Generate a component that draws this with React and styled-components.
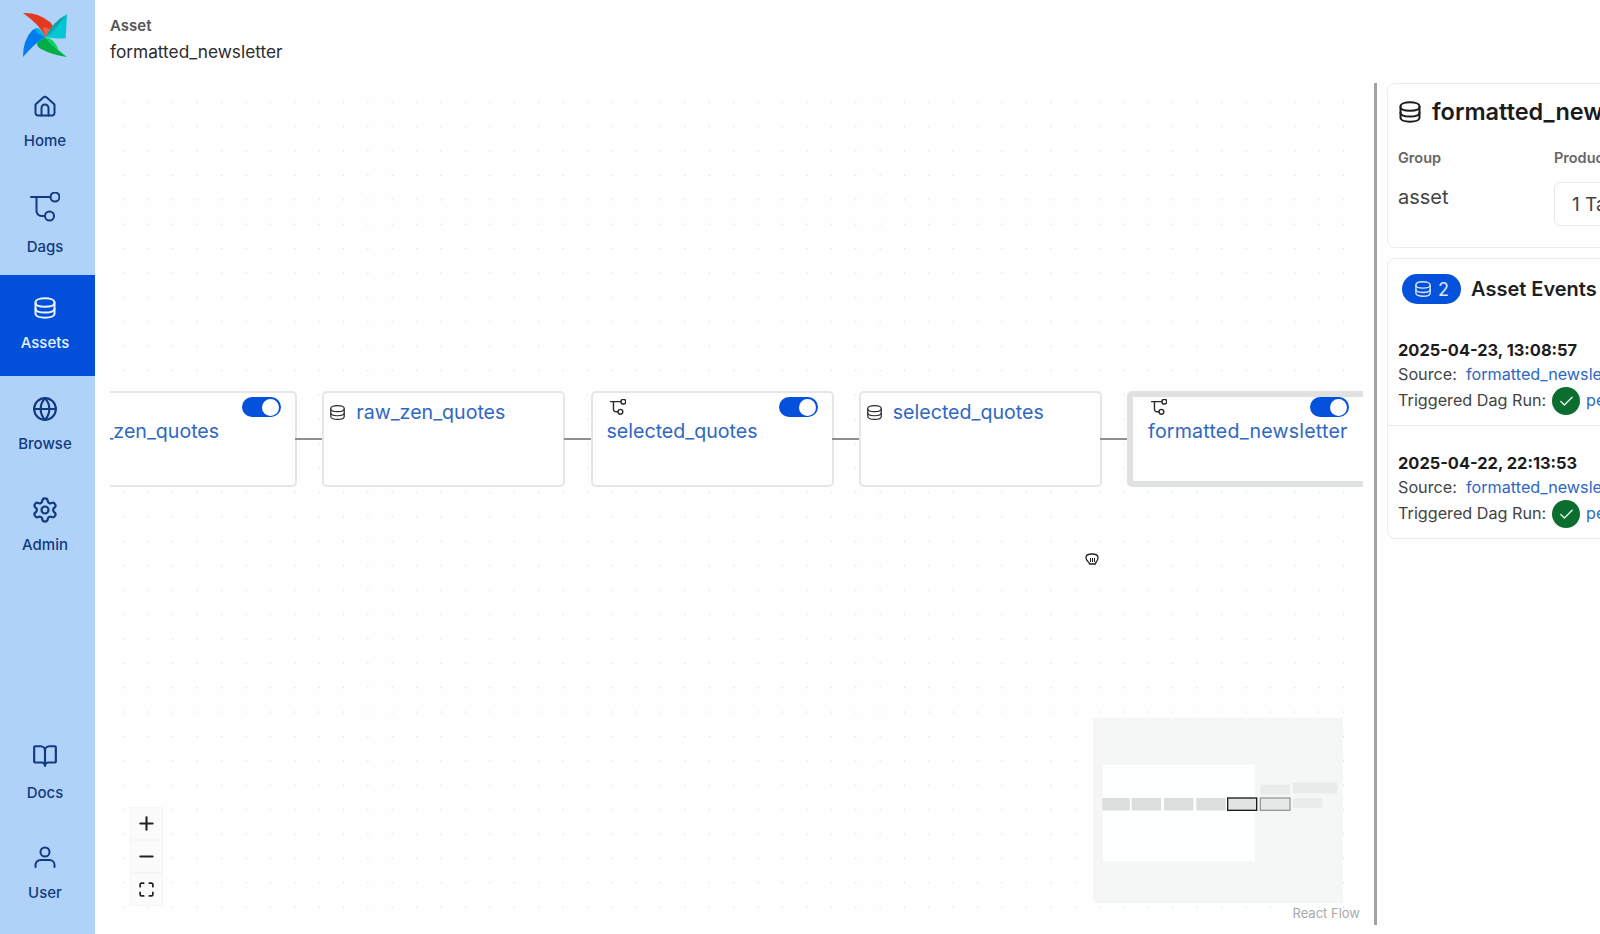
import React from 'react';
import styled, { createGlobalStyle } from 'styled-components';
import { Globe, Settings, BookOpen, Plus, Minus, Maximize, Check } from 'lucide-react';

const GlobalStyle = createGlobalStyle`
    html, body { margin: 0; padding: 0; height: 100%; background: #fefefe; }
    body { font-family: Inter, "Noto Sans", sans-serif; }
    * { box-sizing: border-box; }
`;

// icons
const DatabaseIcon = ({ size = 24, stroke = 2 }) => (
    <svg width={size} height={size} viewBox="0 0 24 24" fill="none" stroke="currentColor" strokeWidth={stroke} strokeLinecap="round" strokeLinejoin="round">
        <path d="M2.500 6.500C2.500 3.800 7 2.300 12 2.300s9.500 1.500 9.500 4.200v11c0 2.700-4.500 4.200-9.500 4.200s-9.500-1.500-9.500-4.200z" />
        <path d="M2.500 7c0 2.600 4.500 3.800 9.500 3.800s9.500-1.200 9.500-3.800" />
        <path d="M2.500 12.800c0 2.600 4.500 3.800 9.500 3.800s9.500-1.200 9.500-3.800" />
    </svg>
);

const DagIcon = ({ size = 30, stroke = 2 }) => (
    <svg width={size} height={size} viewBox="0 0 30 30" fill="none" stroke="currentColor" strokeWidth={stroke * 30 / size} strokeLinecap="round" strokeLinejoin="round">
        <path d="M1 5h19.500" />
        <circle cx="25" cy="5" r="4.500" />
        <path d="M6.500 5v14a5 5 0 0 0 5 5h3.500" />
        <circle cx="19.500" cy="24" r="4.500" />
    </svg>
);

const HomeIcon = () => (
    <svg width="24" height="24" viewBox="0 0 24 24" fill="none" stroke="currentColor" strokeWidth="2" strokeLinecap="round" strokeLinejoin="round">
        <path d="M2.500 10.500l7.800-7a2.600 2.600 0 0 1 3.400 0l7.800 7V19a2.500 2.500 0 0 1-2.500 2.500H5A2.500 2.500 0 0 1 2.500 19z" />
        <path d="M8.500 21.500V14a3.500 3.500 0 0 1 7 0v7.500" />
    </svg>
);

const UserIcon = () => (
    <svg width="24" height="24" viewBox="0 0 24 24" fill="none" stroke="currentColor" strokeWidth="2" strokeLinecap="round" strokeLinejoin="round">
        <circle cx="12" cy="7" r="4.500" />
        <path d="M2.500 22v-2a5 5 0 0 1 5-5h9a5 5 0 0 1 5 5v2" />
    </svg>
);

const Logo = () => (
    <svg width="60" height="60" viewBox="0 0 180 180">
        <path d="M24 24Q70 22 106 52Q120 68 112 82L90 96Q78 62 24 24z" fill="#e43921" />
        <path d="M84 68Q100 66 112 82L90 96z" fill="#f0604a" />
        <path d="M156 28L152 100Q124 102 92 96Q112 52 156 28z" fill="#00c7d4" />
        <path d="M156 28Q128 62 112 82L92 96Q112 52 156 28z" fill="#11a3a8" />
        <path d="M156 156Q112 150 78 132Q62 124 68 112L90 96Q120 132 156 156z" fill="#00ad46" />
        <path d="M90 96Q118 100 130 134Q146 148 156 156Q120 132 90 96z" fill="#04d659" />
        <path d="M24 156Q24 104 52 76Q68 62 90 96Q56 118 24 156z" fill="#017cee" />
        <path d="M60 70Q76 64 90 96L66 84z" fill="#00b4e6" />
    </svg>
);

const GrabCursor = () => (
    <svg width="16" height="16" viewBox="0 0 16 16" fill="#fff" stroke="#222" strokeWidth="1.300" strokeLinejoin="round">
        <path d="M2 6.500c0-2 2.500-3.500 6-3.500s6 1.500 6 3.500c0 1.500-.5 3-1.500 4-.7.8-1 1.500-1 2.500h-6c0-1-.8-1.700-1.800-2.800C2.700 9.200 2 8 2 6.500z" />
        <path d="M6.500 7v4M8.500 7v4M10.500 7v4" strokeWidth="1" />
    </svg>
);

const navTop = [
    { label: 'Home', icon: <HomeIcon /> },
    { label: 'Dags', icon: <DagIcon />, gap: 18 },
    { label: 'Assets', icon: <DatabaseIcon />, active: true },
    { label: 'Browse', icon: <Globe size={26} strokeWidth={2} /> },
    { label: 'Admin', icon: <Settings size={28} strokeWidth={1.900} /> },
];

const navBottom = [
    { label: 'Docs', icon: <BookOpen size={26} strokeWidth={2} />, gap: 15 },
    { label: 'User', icon: <UserIcon />, gap: 14 },
];

const nodes = [
    { type: 'dag', name: 'raw_zen_quotes' },
    { type: 'asset', name: 'raw_zen_quotes' },
    { type: 'dag', name: 'selected_quotes' },
    { type: 'asset', name: 'selected_quotes' },
    { type: 'dag', name: 'formatted_newsletter', selected: true },
];

const events = [
    { date: '2025-04-23, 13:08:57' },
    { date: '2025-04-22, 22:13:53' },
];

const miniNodes = [
    [68, 150], [156, 244], [253, 341], [350, 438],
];

class App extends React.Component {
    renderNavItem(item) {
        return (
            <NavItem key={item.label} $active={item.active}>
                <NavIcon>{item.icon}</NavIcon>
                <NavLabel $gap={item.gap}>{item.label}</NavLabel>
            </NavItem>
        );
    }

    renderNodes() {
        return nodes.map((node, i) => {
            const left = -56 + i * 268.25;
            return (
                <React.Fragment key={i}>
                    {i > 0 && <Edge $left={left - 27} />}
                    {node.type === 'dag' ? (
                        <Node $left={left} $selected={node.selected}>
                            <NodeTop>
                                <NodeDagIcon><DagIcon size={16} stroke={1.400} /></NodeDagIcon>
                                <Toggle><Thumb /></Toggle>
                            </NodeTop>
                            <NodeName $selected={node.selected}>{node.name}</NodeName>
                        </Node>
                    ) : (
                        <Node $left={left} $asset>
                            <AssetRow>
                                <DatabaseIcon size={17} stroke={1.700} />
                                <NodeName $inline>{node.name}</NodeName>
                            </AssetRow>
                        </Node>
                    )}
                </React.Fragment>
            );
        });
    }

    renderEvents() {
        return events.map((event) => (
            <EventRow key={event.date}>
                <EventDate>{event.date}</EventDate>
                <EventLine>
                    <EventKey>Source:</EventKey>
                    <EventLink>formatted_newsletter</EventLink>
                </EventLine>
                <EventLine>
                    <EventKey $wide>Triggered Dag Run:</EventKey>
                    <StatusDot><Check size={17} strokeWidth={2} /></StatusDot>
                    <EventLink>periodic</EventLink>
                </EventLine>
            </EventRow>
        ));
    }

    render() {
        return (
            <Page>
                <GlobalStyle />
                <Sidebar>
                    <LogoBox><Logo /></LogoBox>
                    {navTop.map((item) => this.renderNavItem(item))}
                    <NavSpacer />
                    {navBottom.map((item) => this.renderNavItem(item))}
                </Sidebar>
                <Main>
                    <Header>
                        <HeaderLabel>Asset</HeaderLabel>
                        <HeaderName>formatted_newsletter</HeaderName>
                    </Header>
                    <Body>
                        <Canvas>
                            {this.renderNodes()}
                            <CursorMark><GrabCursor /></CursorMark>
                            <Controls>
                                <ControlButton><Plus size={21} strokeWidth={2.400} /></ControlButton>
                                <ControlButton><Minus size={21} strokeWidth={2.400} /></ControlButton>
                                <ControlButton><Maximize size={17} strokeWidth={2.400} /></ControlButton>
                            </Controls>
                            <MiniMap>
                                <svg width="250" height="185" viewBox="0 0 750 555">
                                    <rect x="30" y="140" width="455" height="290" fill="#fdfefe" />
                                    {miniNodes.map(([a, b]) => (
                                        <rect key={a} x={a - 40} y="240" width={b - a} height="37" fill="#dcdddd" />
                                    ))}
                                    <rect x="404" y="240" width="87" height="37" fill="#e2e3e3" stroke="#1a1a1a" strokeWidth="4" />
                                    <rect x="502" y="240" width="89" height="37" fill="#e6e7e7" stroke="#999" strokeWidth="4" />
                                    <rect x="503" y="200" width="87" height="30" fill="#e9eaea" />
                                    <rect x="600" y="194" width="133" height="32" fill="#e9eaea" />
                                    <rect x="600" y="240" width="88" height="30" fill="#ebecec" />
                                </svg>
                            </MiniMap>
                            <Attribution>React Flow</Attribution>
                        </Canvas>
                        <Divider />
                        <Panel>
                            <InfoCard>
                                <CardTitle>
                                    <DatabaseIcon size={24} stroke={2} />
                                    <TitleText>formatted_newsletter</TitleText>
                                </CardTitle>
                                <Meta>
                                    <MetaColumn>
                                        <MetaLabel>Group</MetaLabel>
                                        <MetaValue>asset</MetaValue>
                                    </MetaColumn>
                                    <MetaColumn>
                                        <MetaLabel>Producing Tasks</MetaLabel>
                                        <TaskButton>1 Task</TaskButton>
                                    </MetaColumn>
                                </Meta>
                            </InfoCard>
                            <EventsCard>
                                <EventsHeader>
                                    <CountBadge>
                                        <DatabaseIcon size={18} stroke={1.800} />
                                        2
                                    </CountBadge>
                                    <EventsTitle>Asset Events</EventsTitle>
                                </EventsHeader>
                                {this.renderEvents()}
                            </EventsCard>
                        </Panel>
                    </Body>
                </Main>
            </Page>
        );
    }
}

export default App;

const Page = styled.div`
    display: flex;
    width: 100vw;
    height: 100vh;
    overflow: hidden;
    background: #fefefe;
`;

const Sidebar = styled.nav`
    flex: 0 0 95px;
    display: flex;
    flex-direction: column;
    padding-bottom: 9px;
    background: #b0d2f8;
`;

const LogoBox = styled.div`
    height: 73px;
    display: flex;
    justify-content: center;
    align-items: flex-start;
    padding: 5px 5px 0 0;
`;

const NavItem = styled.div`
    height: 101px;
    display: flex;
    flex-direction: column;
    align-items: center;
    padding: 21px 5px 0 0;
    color: ${props => props.$active ? '#eaf3ff' : '#123a80'};
    background: ${props => props.$active ? '#0250da' : 'transparent'};
`;

const NavIcon = styled.div`
    height: 24px;
    display: flex;
    align-items: center;
    justify-content: center;
`;

const NavLabel = styled.div`
    margin-top: ${props => props.$gap || 13}px;
    font-size: 15px;
    line-height: 20px;
    font-weight: 500;
`;

const NavSpacer = styled.div`
    flex: 1;
`;

const Main = styled.main`
    flex: 1;
    min-width: 0;
    display: flex;
    flex-direction: column;
`;

const Header = styled.header`
    flex: 0 0 83px;
    padding: 16px 15px 0;
`;

const HeaderLabel = styled.div`
    font-size: 15px;
    line-height: 20px;
    font-weight: 600;
    color: #555;
`;

const HeaderName = styled.div`
    margin-top: 4px;
    font-size: 17.300px;
    line-height: 24px;
    color: #2c2c2c;
`;

const Body = styled.div`
    flex: 1;
    min-height: 0;
    display: flex;
    padding: 0 0 9px 15px;
`;

const Canvas = styled.div`
    position: relative;
    flex: 0 0 1253px;
    overflow: hidden;
    background-color: #fefefe;
    background-image: radial-gradient(circle, #dadada 0.8px, transparent 1px);
    background-size: 24.400px 24.400px;
    background-position: 1.800px 7.100px;
`;

const Node = styled.div`
    position: absolute;
    top: 308px;
    left: ${props => props.$left}px;
    width: 243px;
    height: 96px;
    padding: ${props => props.$selected ? '0 15px 0 15px' : props.$asset ? '7px 14px 0 5px' : '4px 14px 0 14px'};
    border: ${props => props.$selected ? '6px solid #e0e1e1' : '2px solid #e6e6e6'};
    border-radius: 5px;
    background: #fefefe;
`;

const NodeTop = styled.div`
    display: flex;
    justify-content: space-between;
    align-items: flex-start;
    height: 20px;
`;

const NodeDagIcon = styled.div`
    margin: 2px 0 0 3px;
    color: #2b2b2b;
`;

const Toggle = styled.div`
    width: 39px;
    height: 20px;
    display: flex;
    justify-content: flex-end;
    align-items: center;
    padding-right: 2px;
    border-radius: 10px;
    background: #0451dc;
`;

const Thumb = styled.div`
    width: 17px;
    height: 17px;
    border-radius: 50%;
    background: #fff;
`;

const AssetRow = styled.div`
    display: flex;
    align-items: center;
    gap: 10px;
    color: #2b2b2b;
`;

const NodeName = styled.div`
    margin-top: ${props => props.$inline ? 0 : 2}px;
    font-size: 19.600px;
    line-height: 24px;
    letter-spacing: ${props => props.$selected ? '0.2px' : '0'};
    white-space: nowrap;
    color: #2f68c1;
`;

const Edge = styled.div`
    position: absolute;
    top: 355px;
    left: ${props => props.$left}px;
    width: 27px;
    height: 2px;
    background: #8f8f8f;
`;

const CursorMark = styled.div`
    position: absolute;
    left: 974px;
    top: 468px;
    line-height: 0;
`;

const Controls = styled.div`
    position: absolute;
    left: 20px;
    top: 724px;
    display: flex;
    flex-direction: column;
`;

const ControlButton = styled.div`
    width: 33px;
    height: 33px;
    display: flex;
    align-items: center;
    justify-content: center;
    color: #222;
    background: #fbfbfb;
    border: 1px solid #f6f6f6;
`;

const MiniMap = styled.div`
    position: absolute;
    left: 983px;
    top: 635px;
    width: 250px;
    height: 185px;
    line-height: 0;
    background: #f5f6f6;
`;

const Attribution = styled.div`
    position: absolute;
    right: 3px;
    bottom: 3px;
    font-size: 13px;
    line-height: 18px;
    color: #a9a9a9;
`;

const Divider = styled.div`
    flex: 0 0 3px;
    margin-left: 11px;
    background: #a3a3a3;
`;

const Panel = styled.aside`
    flex: 0 0 600px;
    display: flex;
    flex-direction: column;
    align-items: stretch;
    gap: 10px;
    margin-left: 10px;
`;

const InfoCard = styled.section`
    height: 165px;
    padding: 14px 10px 0;
    border: 1px solid #ececec;
    border-radius: 8px;
    background: #fefefe;
`;

const CardTitle = styled.div`
    display: flex;
    align-items: center;
    gap: 10px;
    height: 28px;
    color: #1b1b1b;
`;

const TitleText = styled.h2`
    margin: 0;
    font-size: 23.500px;
    line-height: 28px;
    font-weight: 600;
`;

const Meta = styled.div`
    display: grid;
    grid-template-columns: 156px 1fr;
    margin-top: 22px;
`;

const MetaColumn = styled.div`
    display: flex;
    flex-direction: column;
    align-items: flex-start;
`;

const MetaLabel = styled.div`
    font-size: 14.500px;
    line-height: 20px;
    font-weight: 600;
    color: #666;
`;

const MetaValue = styled.div`
    margin-top: 16px;
    font-size: 20px;
    line-height: 26px;
    color: #444;
`;

const TaskButton = styled.div`
    height: 44px;
    margin-top: 14px;
    padding: 0 17px;
    display: flex;
    align-items: center;
    font-size: 19px;
    color: #444;
    border: 1px solid #e8e8e8;
    border-radius: 6px;
`;

const EventsCard = styled.section`
    height: 281px;
    border: 1px solid #ececec;
    border-radius: 8px;
    background: #fefefe;
`;

const EventsHeader = styled.div`
    height: 54px;
    padding: 15px 0 0 14px;
    display: flex;
    align-items: flex-start;
    gap: 10px;
`;

const CountBadge = styled.div`
    width: 59px;
    height: 30px;
    display: flex;
    align-items: center;
    justify-content: center;
    gap: 6px;
    font-size: 18px;
    color: #dbe8ff;
    border-radius: 15px;
    background: #0451dc;
`;

const EventsTitle = styled.div`
    font-size: 20px;
    line-height: 30px;
    font-weight: 600;
    color: #1f1f1f;
`;

const EventRow = styled.div`
    height: 113px;
    padding: 26px 10px 0;
    border-bottom: 1px solid #e8e8e8;
    &:last-child {
        border-bottom: none;
    }
`;

const EventDate = styled.div`
    font-size: 16.400px;
    line-height: 22px;
    font-weight: 700;
    color: #1c1c1c;
`;

const EventLine = styled.div`
    height: 26px;
    display: flex;
    align-items: center;
    font-size: 16.200px;
    color: #444;
`;

const EventKey = styled.div`
    flex: 0 0 ${props => props.$wide ? 154 : 68}px;
`;

const StatusDot = styled.div`
    flex: 0 0 28px;
    height: 28px;
    margin: 2px 6px 0 0;
    display: flex;
    align-items: center;
    justify-content: center;
    color: #e6f3e9;
    border-radius: 50%;
    background: #0b6e2e;
`;

const EventLink = styled.div`
    color: #2f68c1;
    white-space: nowrap;
`;
